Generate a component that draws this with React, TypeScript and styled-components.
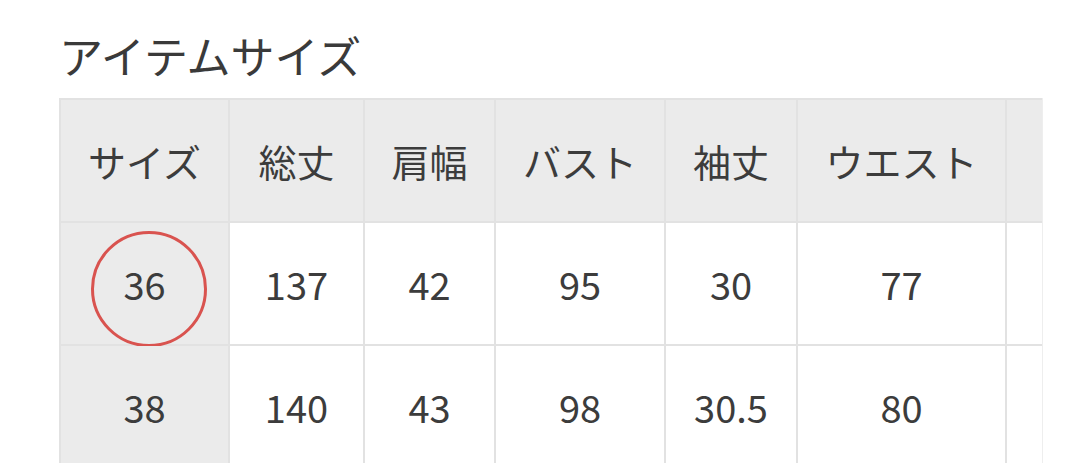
import React from "react";
import styled, { createGlobalStyle } from "styled-components";

const GlobalStyle = createGlobalStyle`
  html, body {
    margin: 0;
    padding: 0;
    background: #ffffff;
  }
  body {
    font-family: "Noto Sans CJK JP", "Noto Sans", sans-serif;
    color: #3a3a3a;
  }
`;

const Page = styled.div`
  width: 1080px;
  height: 463px;
  overflow: hidden;
  padding: 30px 0 0 59px;
  box-sizing: border-box;
  display: flex;
  flex-direction: column;
  gap: 18px;
`;

const Title = styled.h2`
  margin: 0;
  font-size: 44px;
  line-height: 50px;
  font-weight: 400;
  color: #3a3a3a;
  letter-spacing: 0;
`;

const Scroller = styled.div`
  width: 983px;
  overflow: hidden;
  border-right: 1px solid #eeeeee;
`;

const Table = styled.table`
  border-collapse: collapse;
  table-layout: fixed;
  width: max-content;
  font-size: 38px;
  line-height: 1;
`;

const Cell = styled.td<{ $head?: boolean; $w: number }>`
  position: relative;
  width: ${(p) => p.$w}px;
  height: 123px;
  padding: 0;
  box-sizing: border-box;
  border: 2px solid #e2e2e2;
  text-align: center;
  vertical-align: middle;
  white-space: nowrap;
  background: ${(p) => (p.$head ? "#ebebeb" : "#ffffff")};
  color: #3c3c3c;
  font-weight: 400;
`;

const Marker = styled.span`
  position: absolute;
  left: 50%;
  top: 50%;
  width: 116px;
  height: 116px;
  margin-left: -53.5px;
  margin-top: -53px;
  border: 3.5px solid #d9534f;
  border-radius: 50%;
  box-sizing: border-box;
  pointer-events: none;
`;

const widths = [169, 135, 131, 170, 132, 209, 172];
const headers = ["サイズ", "総丈", "肩幅", "バスト", "袖丈", "ウエスト", "ヒップ"];
const rows = [
  ["36", "137", "42", "95", "30", "77", "100"],
  ["38", "140", "43", "98", "30.5", "80", "103"],
];

export default function App() {
  return (
    <>
      <GlobalStyle />
      <Page>
        <Title>アイテムサイズ</Title>
        <Scroller>
          <Table>
            <thead>
              <tr>
                {headers.map((h, i) => (
                  <Cell as="th" key={h} $head $w={widths[i]}>
                    {h}
                  </Cell>
                ))}
              </tr>
            </thead>
            <tbody>
              {rows.map((r, ri) => (
                <tr key={r[0]}>
                  {r.map((v, i) => (
                    <Cell key={i} $head={i === 0} $w={widths[i]}>
                      {v}
                      {ri === 0 && i === 0 && <Marker />}
                    </Cell>
                  ))}
                </tr>
              ))}
            </tbody>
          </Table>
        </Scroller>
      </Page>
    </>
  );
}
